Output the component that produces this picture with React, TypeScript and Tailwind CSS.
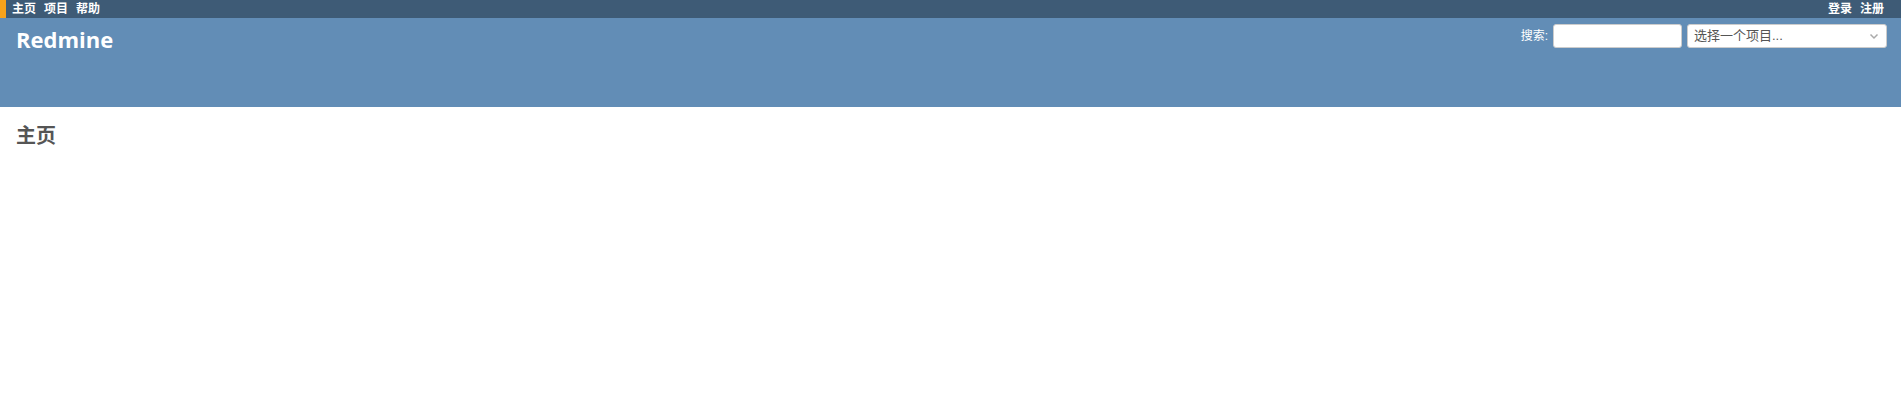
import React from "react";

export default function App() {
  const font = { fontFamily: '"Liberation Sans", "Noto Sans CJK SC", sans-serif' };
  return (
    <div className="min-h-screen bg-white text-[12px] text-[#333]" style={font}>
      {/* top menu */}
      <div className="flex h-[18px] items-center justify-between bg-[#3e5b76] text-white font-bold">
        <div className="flex h-full items-center">
          <span className="h-full w-[6px] bg-[#f7a21b]" />
          <ul className="ml-[6px] flex gap-[8px]">
            <li>主页</li>
            <li>项目</li>
            <li>帮助</li>
          </ul>
        </div>
        <ul className="mr-[17px] flex gap-[8px]">
          <li>登录</li>
          <li>注册</li>
        </ul>
      </div>

      {/* header */}
      <div className="flex h-[89px] items-start justify-between bg-[#628db6] text-white">
        <h1 className="ml-[16px] mt-[5px] text-[22px] font-bold" style={{ fontFamily: '"Open Sans", sans-serif' }}>
          Redmine
        </h1>
        <div className="mr-[14px] mt-[6px] flex items-center">
          <label className="mr-[5px] text-[12px]">搜索:</label>
          <input className="h-[24px] w-[129px] rounded-[3px] border border-[#ccc] bg-white px-1 text-[#333]" />
          <div className="ml-[5px] flex h-[24px] w-[200px] items-center justify-between rounded-[3px] border border-[#ccc] bg-white pl-[6px] pr-[6px] text-[13px] text-[#555]">
            <span>选择一个项目...</span>
            <svg width="12" height="12" viewBox="0 0 12 12" fill="none" stroke="#aaa" strokeWidth="1.5">
              <path d="M2.5 4.5 6 8l3.5-3.5" />
            </svg>
          </div>
        </div>
      </div>

      {/* content */}
      <div className="px-[16px] pt-[14px]">
        <h2 className="text-[20px] font-bold text-[#555]">主页</h2>
      </div>
    </div>
  );
}
